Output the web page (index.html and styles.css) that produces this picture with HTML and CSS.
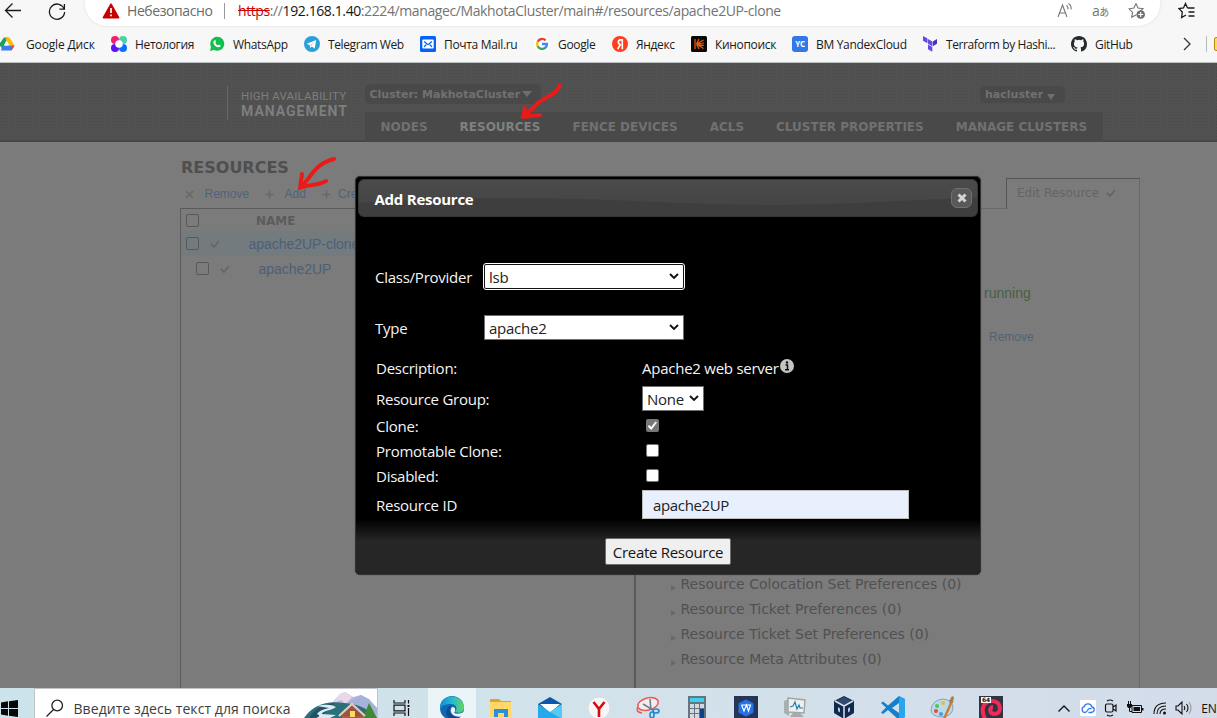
FILE: index.html
```html
<!DOCTYPE html>
<html lang="ru">
<head>
<meta charset="utf-8">
<title>High Availability Management</title>
<link rel="stylesheet" href="styles.css">
</head>
<body>
<div class="screen">
  <header class="browser">
    <div class="toolbar">
      <svg class="ic-back" width="18" height="18" viewBox="0 0 18 18"><path d="M17 9.5H1.5M8.5 2.5l-7 7 7 7" fill="none" stroke="#1b1b1b" stroke-width="1.3"/></svg>
      <svg class="ic-reload" width="18" height="18" viewBox="0 0 18 18"><path d="M16.2 7.2A7.6 7.6 0 1 0 16.6 10" fill="none" stroke="#1b1b1b" stroke-width="1.3"/><path d="M16.4 2v5.2h-5" fill="none" stroke="#1b1b1b" stroke-width="1.3"/></svg>
      <div class="address">
        <svg class="ic-warn" width="18" height="16" viewBox="0 0 18 16"><path d="M9 1.2 16.6 14.6H1.4z" fill="#c80000" stroke="#c80000" stroke-width="1.6" stroke-linejoin="round"/><path d="M9 5v5M9 11.5v1.8" stroke="#fff" stroke-width="1.7"/></svg>
        <span class="insecure">Небезопасно</span>
        <span class="sep"></span>
        <span class="url"><s>https</s>://<b>192.168.1.40</b>:2224/managec/MakhotaCluster/main#/resources/apache2UP-clone</span>
        <span class="address-icons">
          <svg width="17" height="16" viewBox="0 0 17 16" fill="none" stroke="#757575" stroke-width="1.1"><path d="M1 15 5.5 3 10 15M2.6 11h5.8"/><path d="M9.5 3.2q1.8 1.4 1.5 4M11.500 1.500q3 2 2.600 6"/></svg>
          <span class="translate">a<small>あ</small></span>
          <svg width="18" height="18" viewBox="0 0 18 18"><path d="m8 1.5 2 4.5 5 .6-3.6 3.5M8 13l-4.3 2.3.9-4.9L1 6.800l4.900-.7L8 1.500" fill="none" stroke="#757575" stroke-width="1.1"/><circle cx="12.700" cy="12.500" r="4.300" fill="#707070"/><path d="M12.700 10v5M10.200 12.500h5" stroke="#fff" stroke-width="1.100"/></svg>
        </span>
      </div>
      <svg class="ic-fav" width="18" height="18" viewBox="0 0 18 18" fill="none" stroke="#1b1b1b" stroke-width="1.300"><path d="M9.500 6 7.500 1.500 5.500 6 1 6.600 4.300 10 3.600 15.500 8 13M9.500 6h7M10.500 10h6M10.500 14h6"/></svg>
    </div>
    <nav class="bookmarks">
      <a class="bm"><svg width="16" height="16" viewBox="0 0 16 16"><path d="M5 1.500h4L3.500 13 0 8.500z" fill="#17a35a"/><path d="M6 1.500h4.500l5 8h-5z" fill="#fdbb04"/><path d="M3.500 9.500h12L12.500 14.500H2z" fill="#3c7ded"/><path d="m12 10 3.500-.5-3 5z" fill="#ea4335"/><path d="M6.900 5.500 9 9.500H5z" fill="#f7f7f7"/></svg><span>Google Диск</span></a>
      <a class="bm"><svg width="16" height="16" viewBox="0 0 16 16"><rect x="4" y="4" width="8" height="8" fill="#e9e4f6"/><circle cx="4" cy="4" r="4" fill="#f0206f"/><circle cx="12" cy="4" r="4" fill="#49d3a2"/><circle cx="4" cy="12" r="4" fill="#5b12f2"/><circle cx="12" cy="12" r="4" fill="#0b70ff"/><circle cx="8" cy="8" r="3.800" fill="#fff"/></svg><span>Нетология</span></a>
      <a class="bm"><svg width="16" height="16" viewBox="0 0 16 16"><path d="M1 15 2 11a7 7 0 1 1 3 3z" fill="#12c14b"/><path d="M5.200 4.500q1.200-1 1.500.4l.3 1.200-.7.900q1 1.700 2.700 2.400l.9-.900 1.800.9q-.3 2-2.400 1.900-4.600-1-5-5.400z" fill="#fff"/></svg><span>WhatsApp</span></a>
      <a class="bm"><svg width="16" height="16" viewBox="0 0 16 16"><circle cx="8" cy="8" r="8" fill="#2ba0da"/><path d="m2.800 7.800 9.400-3.900-1.500 8.700-3-2.200-1.500 1.500-.4-2.700z" fill="#fff"/><path d="m6 9.300 4.600-3.700-3.500 4.500z" fill="#a9d6ee"/></svg><span class="tight">Telegram Web</span></a>
      <a class="bm"><svg width="16" height="16" viewBox="0 0 16 16"><rect width="16" height="16" rx="1.500" fill="#0560fc"/><rect x="2.300" y="3.500" width="11.400" height="9" rx="1" fill="#fff"/><path d="M4.200 5.500 7 8q1 .8 2 0l2.800-2.500M4 10.800l2.200-2M12 10.800l-2.200-2" stroke="#0560fc" stroke-width="1.300" fill="none"/></svg><span>Почта Mail.ru</span></a>
      <a class="bm"><svg width="16" height="16" viewBox="0 0 16 16" fill="none" stroke-width="2.300"><circle cx="8" cy="8" r="8" fill="#fff"/><path d="M11.600 4.400A4.900 4.900 0 0 0 3.700 5.700" stroke="#ea4335"/><path d="M3.700 5.600a5 5 0 0 0 0 4.800" stroke="#fbbc05"/><path d="M3.700 10.200a5 5 0 0 0 7.700 1.500" stroke="#34a853"/><path d="M8 8h5a5 5 0 0 1-1.700 3.800" stroke="#4285f4"/></svg><span>Google</span></a>
      <a class="bm"><svg width="16" height="16" viewBox="0 0 16 16"><circle cx="8" cy="8" r="8" fill="#fc3f1d"/><path d="M10.300 3v10.200M10.300 3.900H8.400q-2 .2-2 2.300 0 1.900 2.300 2.500M8.600 8l-2.900 5.200" fill="none" stroke="#fff" stroke-width="1.600"/></svg><span>Яндекс</span></a>
      <a class="bm"><svg width="16" height="16" viewBox="0 0 16 16"><rect width="16" height="16" rx="1.500" fill="#090909"/><path d="M4 3v10M5.500 8 8 3M5.500 8l7-4M5.500 8l7.500-1M5.500 8l7.500 1.500M5.500 8l7 4.500M5.500 8 8 13" stroke="#f45a08" stroke-width="1.200"/></svg><span>Кинопоиск</span></a>
      <a class="bm"><span class="yc">YC</span><span>BM YandexCloud</span></a>
      <a class="bm"><svg width="16" height="16" viewBox="0 0 16 16"><path d="m1 0 4.500 2.500v4.800L1 4.800zM6 3l4.300 2.400v4.800L6 7.800zM6 8.600l4.300 2.400v4.800L6 13.200z" fill="#6448ea"/><path d="m15 3-4.200 2.400v4.800L15 7.700z" fill="#4336bd"/></svg><span class="tight">Terraform by Hashi...</span></a>
      <a class="bm"><svg width="16" height="16" viewBox="0 0 16 16"><path d="M8 0C3.580 0 0 3.580 0 8c0 3.540 2.290 6.530 5.470 7.590.4.070.55-.17.55-.38 0-.19-.01-.82-.01-1.490-2.010.37-2.530-.49-2.690-.94-.09-.23-.48-.94-.82-1.130-.28-.15-.68-.52-.01-.53.63-.01 1.080.58 1.230.82.72 1.210 1.870.87 2.330.66.07-.52.28-.87.51-1.070-1.780-.2-3.640-.89-3.640-3.950 0-.87.31-1.590.82-2.150-.08-.2-.36-1.020.08-2.120 0 0 .67-.21 2.200.82a7.500 7.500 0 0 1 4 0c1.530-1.040 2.200-.82 2.200-.82.44 1.100.16 1.920.08 2.120.51.56.82 1.270.82 2.150 0 3.070-1.870 3.750-3.650 3.950.29.25.54.73.54 1.480 0 1.070-.01 1.930-.01 2.200 0 .21.15.46.55.38A8 8 0 0 0 16 8c0-4.420-3.580-8-8-8z" fill="#24292f"/></svg><span>GitHub</span></a>
      <svg class="chev" width="8" height="14" viewBox="0 0 8 14"><path d="m1 1 6 6-6 6" fill="none" stroke="#333" stroke-width="1.300"/></svg>
      <span class="bm-sep"></span>
      <span class="folder"></span>
    </nav>
  </header>

  <main class="page">
    <div class="banner">
      <div class="brand"><span class="brand-top">HIGH AVAILABILITY</span><span class="brand-bottom">MANAGEMENT</span></div>
      <div class="banner-main">
        <div class="selectors">
          <span class="pill cluster">Cluster: MakhotaCluster<i class="down"></i></span>
          <span class="pill user">hacluster<i class="down"></i></span>
        </div>
        <nav class="tabs"><a>NODES</a><a class="current">RESOURCES</a><a>FENCE DEVICES</a><a>ACLS</a><a>CLUSTER PROPERTIES</a><a>MANAGE CLUSTERS</a></nav>
      </div>
    </div>

    <div class="content">
      <section class="list">
        <h1>RESOURCES</h1>
        <div class="actions">
          <svg width="9" height="9" viewBox="0 0 9 9"><path d="m1 1 7 7M8 1 1 8" stroke="#686868" stroke-width="1.500"/></svg><a class="a-remove">Remove</a>
          <svg width="9" height="9" viewBox="0 0 9 9"><path d="M4.500 .5v8M.5 4.500h8" stroke="#686868" stroke-width="1.500"/></svg><a class="a-add">Add</a>
          <svg width="9" height="9" viewBox="0 0 9 9"><path d="M4.500 .5v8M.5 4.500h8" stroke="#686868" stroke-width="1.500"/></svg><a>Create</a>
        </div>
        <div class="table">
          <div class="row head"><i class="box"></i><span>NAME</span></div>
          <div class="row selected"><i class="box"></i><svg class="tick" width="10" height="8" viewBox="0 0 10 8"><path d="m1 4 3 3 5-6" fill="none" stroke="#676767" stroke-width="1.900"/></svg><a>apache2UP-clone</a></div>
          <div class="row child"><i class="box"></i><svg class="tick" width="10" height="8" viewBox="0 0 10 8"><path d="m1 4 3 3 5-6" fill="none" stroke="#676767" stroke-width="1.900"/></svg><a>apache2UP</a></div>
        </div>
      </section>
      <section class="detail">
        <div class="tabrow"><span class="tabfill"></span><span class="edit">Edit Resource<svg width="10" height="8" viewBox="0 0 10 8"><path d="m1 4 3 3 5-6" fill="none" stroke="#666" stroke-width="1.900"/></svg></span></div>
        <div class="panel">
          <span class="running">running</span>
          <a class="remove">Remove</a>
          <ul class="prefs">
            <li>Resource Colocation Set Preferences (0)</li>
            <li>Resource Ticket Preferences (0)</li>
            <li>Resource Ticket Set Preferences (0)</li>
            <li>Resource Meta Attributes (0)</li>
          </ul>
        </div>
      </section>
    </div>

  </main>

  <footer class="taskbar">
    <span class="start"><svg width="17" height="17" viewBox="0 0 17 17"><path d="M0 2.400 7 1.300V8H0zM8 1.200 17 0v8H8zM0 9h7v6.700l-7-1.100zM8 9h9v8l-9-1.300z" fill="#080808"/></svg></span>
    <div class="search">
      <svg class="mag" width="18" height="18" viewBox="0 0 18 18"><circle cx="11.200" cy="6.500" r="5.300" fill="none" stroke="#222" stroke-width="1.300"/><path d="m7.500 10.500-7 7" stroke="#222" stroke-width="1.300"/></svg>
      <span>Введите здесь текст для поиска</span>
      <svg class="scene" width="73" height="26" viewBox="0 0 73 26"><path d="M28 11 36 2l5-2 8 5 8-2 16 13v10H20z" fill="#c3b7dc"/><path d="m36 2-7 9 8-3 5 4 6-7-7-5z" fill="#e9d9e8"/><path d="M42 11 57 3l8 4 8 9v6z" fill="#a5b3da"/><path d="M0 26Q13 7 40 11q20 1 33 15z" fill="#2b6f78"/><path d="M5 26Q14 12 31 11q-7 5-14 15z" fill="#245265"/><path d="M13 14q13-3 19 1-2 2-10 4-5 2-4 3l14 1-6 3H12q6-2 1-4 2-4 12-6-6-1-12-2z" fill="#dcecf2"/><path d="M59 26 65 11l8 15z" fill="#3c8936"/><path d="M38 21h22v5H38z" fill="#a65f42"/><path d="M35 24 48 12l13 12" fill="#945743" stroke="#e9c7bd" stroke-width="2.200"/><path d="M46 19h5v6h-5z" fill="#ffda5a"/></svg>
    </div>
    <span class="task"><svg width="17" height="16" viewBox="0 0 17 16" fill="none" stroke="#111" stroke-width="1.200"><path d="M1 0v3h11V0M1 16v-3h11v3M1 5.200h11v5.600H1zM15.500 0v3.500M15.500 8v8"/><path d="M14.500 5h2v2h-2z" fill="#111" stroke="none"/></svg></span>
    <span class="app active"><svg width="24" height="24" viewBox="0 0 24 24"><defs><linearGradient id="edge" x2="1"><stop stop-color="#1789d5"/><stop offset=".5" stop-color="#23bcd2"/><stop offset="1" stop-color="#65d65b"/></linearGradient></defs><circle cx="12" cy="12" r="12" fill="#1267b3"/><path d="M0 11C1-3 22-3 24 11c0 5-4 7-9 5 3-4 1-8-4-8C5 8 1 10 0 14z" fill="url(#edge)"/><path d="M12 9q-5 5 0 10 5 3 10 0-4 5-10 5C4 22 5 11 12 9z" fill="#0b4a91"/><path d="M12 11q4 0 3 4-.5 2-1 2 4 2 10-1v4q-7 2-11-1-4-4-1-8z" fill="#edf5f8"/></svg></span>
    <span class="app"><svg width="22" height="20" viewBox="0 0 22 20"><path d="M0 1h9l2 2h10v16H0z" fill="#dfa422"/><path d="M0 4h21v15H0z" fill="#ffd869"/><path d="M4 19v-8h14v8h-4v-4H8v4z" fill="#2c8fd8"/></svg></span>
    <span class="app"><svg width="24" height="24" viewBox="0 0 24 24"><path d="M0 8 12 1l12 7v15H0z" fill="#0c58aa"/><path d="M2 8h20l-10 9z" fill="#fff"/><path d="m0 8 12 8 12-8v15H0z" fill="#25a9e8"/><path d="M12 16 24 8v15z" fill="#55c8f5"/></svg></span>
    <span class="app"><svg width="24" height="24" viewBox="0 0 24 24"><circle cx="12" cy="12" r="11" fill="#f7f7f7" stroke="#ddd"/><path d="m6.500 6 5.500 7 5.500-7M12 13v8" fill="none" stroke="#d90a0a" stroke-width="2.600"/></svg></span>
    <span class="app"><svg width="25" height="24" viewBox="0 0 25 24" fill="none"><ellipse cx="13" cy="8" rx="10.500" ry="6" transform="rotate(-15 13 8)" fill="#f5eef0" stroke="#e95757" stroke-width="1.500"/><path d="M3 11q-3 5 4 6" stroke="#e95757" stroke-width="1.500"/><path d="m15 3 1 11M8 8l10 6" stroke="#707e88" stroke-width="1.600"/><ellipse cx="21" cy="15" rx="3" ry="2" stroke="#268bce" stroke-width="1.700"/><ellipse cx="17" cy="19" rx="2" ry="3" stroke="#268bce" stroke-width="1.700"/></svg></span>
    <span class="app"><svg width="18" height="24" viewBox="0 0 18 24"><path d="M0 0h18v24H0z" fill="#657482"/><path d="M2 2h14v4H2z" fill="#3ad0ee"/><path d="M2 8h4v4H2zM7 8h4v4H7zM12 8h4v4h-4zM2 13h4v4H2zM7 13h4v4H7zM2 18h4v4H2zM7 18h4v4H7z" fill="#d5d8dc"/><path d="M12 13h4v9h-4z" fill="#0b4388"/></svg></span>
    <span class="app"><svg width="24" height="24" viewBox="0 0 24 24"><path d="M0 0h24v24H0z" fill="#263557"/><path d="m12 4 7 3.500v9L12 20l-7-3.500v-9z" fill="#2372e8" stroke="#2372e8" stroke-linejoin="round"/><path d="m7.500 9 2.500 6 2.500-6 2 6 2-6h-9" fill="none" stroke="#fff" stroke-width="1.200"/></svg></span>
    <span class="app"><svg width="24" height="22" viewBox="0 0 24 22"><path d="m1 4 5-2v17l-5-3z" fill="#a9b0b0"/><path d="m5 1 17 2-1 13-16-1z" fill="#efefed" stroke="#a5a6a1" stroke-width="1.500"/><path d="m7 10 3-1 2-4 2 7 2-4 1 3 3 0" fill="none" stroke="#1785bd" stroke-width="1.200"/><path d="m10 16-3 4h14l-4-4" fill="#aaa"/></svg></span>
    <span class="app"><svg width="20" height="24" viewBox="0 0 20 24"><path d="m10 0 10 5v12l-10 6-10-6V5z" fill="#10294d"/><path d="m2 5 8-4 8 4-8 4z" fill="#314a70"/><path d="m1 5 9 5v12M19 5l-9 5" stroke="#dce2ed" stroke-width="1.500" fill="none"/><path d="m4 11 2 1.500v4L4 15zM14 12.500l2-1.500v4l-2 1.500z" fill="#bdc9de"/></svg></span>
    <span class="app"><svg width="24" height="24" viewBox="0 0 24 24"><path d="m18 0 6 3v18l-6 3L7 14l-5 4-2-1.500 5-5L0 7l2-1.500 5 4zM18 7l-7 5 7 5z" fill="#1480cb"/><path d="m18 0 6 3v18l-6 3z" fill="#2aa5ed"/></svg></span>
    <span class="app"><svg width="25" height="24" viewBox="0 0 25 24"><path d="M13 3Q2 4 1 14q0 6 10 7 11 0 12-9 0-8-10-9z" fill="#b8dbe9" stroke="#80a6b9"/><circle cx="7" cy="10" r="2" fill="#5ac04f"/><circle cx="13" cy="7" r="2" fill="#f4b92e"/><circle cx="6" cy="15" r="2" fill="#e54b35"/><circle cx="11" cy="18" r="2" fill="#419fde"/><path d="M22 5 14 23" stroke="#cf7d35" stroke-width="2.500"/><path d="m19 5 3-5 2 1-1 6-3 1z" fill="#a87f54"/></svg></span>
    <span class="app debian"><svg width="24" height="24" viewBox="0 0 24 24"><path d="M0 0h24v24H0z" fill="#303544"/><path d="M6 23C0 10 7 5 13 5c10 0 10 13 3 13-6 0-6-7-2-7" fill="none" stroke="#f02b57" stroke-width="4"/></svg><b>64</b></span>
    <span class="tray">
      <svg width="14" height="9" viewBox="0 0 14 9"><path d="m1.500 7.500 5.500-5.500 5.500 5.500" fill="none" stroke="#111" stroke-width="1.400"/></svg>
      <svg width="16" height="16" viewBox="0 0 16 16"><rect width="16" height="16" rx="1" fill="#fff"/><path d="M4.500 12.500a3 3 0 0 1-.3-5.800 4 4 0 0 1 7.700.3q2.800.7 2.300 3.200-.6 2.300-3 2.300H8.500M4.500 12.500q2 0 3-2l1-1.500q1.500-1.200 3 0" fill="none" stroke="#337af2" stroke-width="1.300"/></svg>
      <svg width="14" height="18" viewBox="0 0 14 18" fill="none" stroke="#111" stroke-width="1.200"><rect x="1.500" y="5" width="7.500" height="8" rx="1.500"/><path d="m9 8 3-2v6l-3-2M3 2q3-2 6 0M3 16q3 2 6 0"/></svg>
      <svg width="17" height="14" viewBox="0 0 17 14"><path d="M5 4.500h9.500v7H5z" fill="none" stroke="#111"/><path d="M6.500 6h6.500v4H6.500zM15 7h1.500v2.500H15zM0 3h5v2.500L3.500 7h-2L0 5.500zM1 0h1v3H1zM3 0h1v3H3z" fill="#111"/><path d="M2.500 6v4.500H5" stroke="#111" fill="none"/></svg>
      <svg width="14" height="14" viewBox="0 0 14 14" fill="none" stroke="#111" stroke-width="1.100"><path d="M1 13Q1 2 13 2M4 13q0-8 9-8M7 13q0-5 6-5"/><circle cx="11.500" cy="12" r="1.500" fill="#111" stroke="none"/></svg>
      <svg width="17" height="14" viewBox="0 0 17 14" fill="none" stroke="#111" stroke-width="1.100"><path d="M1 5h2l4-4v12L3 9H1zM9 5q1.500 2 0 4M11.500 3q3 4 0 8"/><path d="M14 1q4 6 0 12" stroke="#999"/></svg>
      <span>EN</span>
    </span>
  </footer>

  <div class="dialog">
    <div class="titlebar">
      <svg class="wave" width="619" height="36" viewBox="0 0 619 36" preserveAspectRatio="none"><path d="M0 23C80 18 170 17 250 20S390 27 470 24 570 19 619 18V36H0z" fill="#3c3c3c" opacity=".75"/></svg>
      <span class="title">Add Resource</span>
      <span class="close"><svg width="10" height="10" viewBox="0 0 10 10"><path d="m1.500 1.500 7 7M8.500 1.500l-7 7" stroke="#d5d5d5" stroke-width="2.900"/></svg></span>
    </div>
    <form class="form">
      <label class="pick"><span>Class/Provider</span><span class="select focus"><em>lsb</em><svg width="10" height="7" viewBox="0 0 10 7"><path d="m1 1 4 4 4-4" fill="none" stroke="#111" stroke-width="1.900"/></svg></span></label>
      <label class="pick type"><span>Type</span><span class="select"><em>apache2</em><svg width="10" height="7" viewBox="0 0 10 7"><path d="m1 1 4 4 4-4" fill="none" stroke="#111" stroke-width="1.900"/></svg></span></label>
      <div class="fields">
        <span>Description:</span><span class="desc">Apache2 web server<svg width="14" height="14" viewBox="0 0 14 14"><circle cx="7" cy="7" r="7" fill="#c4c4c4"/><path d="M5.500 6h2v4.500M5 10.800h4" fill="none" stroke="#111" stroke-width="1.500"/><circle cx="7" cy="3.500" r="1.200" fill="#111"/></svg></span>
        <span>Resource Group:</span><span class="select small"><em>None</em><svg width="10" height="7" viewBox="0 0 10 7"><path d="m1 1 4 4 4-4" fill="none" stroke="#111" stroke-width="1.900"/></svg></span>
        <span>Clone:</span><i class="check on"><svg width="13" height="13" viewBox="0 0 13 13"><path d="m2.500 6.700 2.700 2.800 5-6.500" fill="none" stroke="#fff" stroke-width="2"/></svg></i>
        <span>Promotable Clone:</span><i class="check lower"></i>
        <span>Disabled:</span><i class="check"></i>
        <span>Resource ID</span><span class="input">apache2UP</span>
      </div>
    </form>
    <div class="buttons"><span class="create">Create Resource</span></div>
  </div>

  <svg class="mark mark-tab" width="48" height="44" viewBox="0 0 48 44"><path d="M43 5C39 16 26 17 19 25L7 37M8 28 6 37l17-2" fill="none" stroke="#e81b1b" stroke-width="4" stroke-linecap="round" stroke-linejoin="round"/></svg>
  <svg class="mark mark-add" width="44" height="40" viewBox="0 0 44 40"><path d="M38 4C25 7 18 15 12 24L5 32M6 19 4 33C12 29 22 31 30 26" fill="none" stroke="#e81b1b" stroke-width="4" stroke-linecap="round" stroke-linejoin="round"/></svg>
</div>
</body>
</html>
```

FILE: styles.css
```css
* { box-sizing: border-box; }
body { margin: 0; background: #7b7b7b; font-family: "Open Sans", "Noto Sans", sans-serif; }
svg { display: block; flex: none; }
.screen { position: relative; width: 1217px; height: 718px; overflow: hidden; display: flex; flex-direction: column; white-space: nowrap; }

/* browser chrome */
.browser { flex: none; height: 63px; background: #f7f7f7; border-bottom: 1px solid #bdc0c0; display: flex; flex-direction: column; }
.toolbar { height: 26px; display: flex; align-items: flex-start; flex: none; }
.ic-back { margin: 1px 0 0 4px; }
.ic-reload { margin: 2px 0 0 26px; }
.address { margin-left: 19px; width: 1075px; height: 26px; background: #fff; border-radius: 0 0 22px 22px; box-shadow: 0 0 3px #ddd; display: flex; align-items: flex-start; padding-left: 17px; }
.ic-warn { margin-top: 3px; }
.insecure { margin-left: 7px; width: 97px; font-size: 14px; line-height: 22px; color: #6b6b6b; letter-spacing: -.42px; }
.sep { width: 1px; height: 16px; margin-top: 3px; background: #999; }
.url { margin-left: 13px; width: 819px; font-size: 14px; line-height: 22px; color: #737373; letter-spacing: -.4px; }
.url s { color: #c80000; }
.url b { font-weight: 400; color: #151515; }
.address-icons { display: flex; gap: 18px; padding-top: 2px; }
.translate { font: 14px/17px "Open Sans", "Noto Sans CJK JP", sans-serif; color: #757575; width: 18px; letter-spacing: -.5px; }
.translate small { font-size: 10px; }
.ic-fav { margin: 2px 0 0 18px; }
.bookmarks { height: 36px; display: grid; grid-template-columns: 112px 98px 95px 116px 114px 78px 79px 101px 130px 149px 112px 23px 8px 4px; align-items: center; margin-left: -1px; font-size: 12px; color: #1a1a1a; }
.bm { display: flex; align-items: center; gap: 8px; letter-spacing: -.33px; }
.bm:first-child { gap: 11px; letter-spacing: -.15px; }
.tight { letter-spacing: -.4px; }
.yc { width: 16px; height: 16px; border-radius: 3px; background: #3378eb; color: #fff; font: bold 8px/16px "Open Sans", sans-serif; text-align: center; }
.bm-sep { width: 1px; height: 16px; background: #bbb; }
.folder { width: 8px; height: 14px; background: #ffd763; border: 1px solid #bd8a16; border-radius: 2px; }

/* dimmed application page */
.page { flex: none; height: 625px; overflow: hidden; background: #7b7b7b; font-family: "DejaVu Sans", sans-serif; }
.banner { height: 79px; display: flex; padding-left: 227px; background: radial-gradient(circle, #4b4b4b 0 .5px, transparent 1px) 0 0 / 3px 3px, #515151; border-bottom: 2px solid #474747; }
.brand { width: 138px; height: 34px; margin-top: 23px; border-left: 1px solid #696969; padding-left: 13px; display: flex; flex-direction: column; color: #7e7e7e; }
.brand-top { font: 11.500px/20px Roboto, sans-serif; letter-spacing: .2px; }
.brand-bottom { font: bold 14px/11px Roboto, sans-serif; letter-spacing: 1px; }
.banner-main { width: 738px; font-weight: bold; color: #717171; }
.selectors { display: flex; height: 49px; padding-top: 21px; align-items: flex-start; font-size: 11px; }
.pill { height: 20px; border-radius: 5px; background: #494949; display: flex; align-items: center; padding: 1px 0 0 4.500px; }
.cluster { width: 176px; }
.cluster .down { margin-top: -1px; margin-left: 2px; }
.user { width: 85px; height: 17px; margin: 2px 0 0 439px; padding: 0 0 0 5px; line-height: 15px; }
.down { border: 5px solid transparent; border-top: 6px solid #6e6e6e; border-bottom: 0; margin-left: 3px; }
.user .down { margin-top: 4px; margin-left: 4px; border-width: 6px 4.500px 0; }
.tabs { height: 30px; background: #494949; display: flex; gap: 32px; padding-left: 15.500px; font-size: 12px; line-height: 31px; }
.current { color: #808080; }
.content { display: flex; padding-left: 180px; height: 546px; }
.list { width: 454px; }
.list h1 { margin: 16px 0 0 1px; font-size: 16px; line-height: 19px; color: #4f4f4f; }
.actions { height: 31px; display: flex; align-items: center; padding: 3px 0 0 5px; font: 12px "Liberation Sans", sans-serif; color: #4f6378; }
.actions a { margin-left: 10.500px; }
.actions .a-remove { width: 60.500px; }
.actions .a-add { width: 37px; }
.actions a:last-child { margin-left: 7.500px; }
.table { height: 490px; border: 1px solid #5b5b5b; border-width: 1px 0 0 1px; }
.row { display: flex; align-items: center; height: 25px; padding-left: 5px; color: #4b6077; font: 14px "Liberation Sans", sans-serif; }
.row.head { height: 22px; font: bold 12px "DejaVu Sans", sans-serif; color: #5b5b5b; padding-top: 1px; }
.head span { margin-left: 57px; }
.selected { background: #747b7f; }
.child { padding-left: 15px; }
.box { width: 13px; height: 13px; border: 1px solid #585858; border-radius: 2px; }
.tick { margin: 0 28.500px 0 11px; }
.child a, .selected a { letter-spacing: -.04px; }
.detail { width: 506px; padding-top: 36px; }
.tabrow { height: 31px; display: flex; }
.tabfill { width: 372px; border-bottom: 1px solid #696969; }
.edit { width: 134px; border: 1px solid #565656; border-bottom: 0; border-right-color: #696969; padding: 0 0 2px 10px; display: flex; gap: 7px; align-items: center; font-size: 12px; line-height: 25px; color: #646464; }
.panel { height: 490px; border-left: 2px solid #5b5b5b; border-right: 1px solid #696969; display: flex; flex-direction: column; font-family: "Liberation Sans", sans-serif; }
.running { margin: 74px 0 0 348px; font-size: 14px; line-height: 20px; color: #465f43; }
.remove { margin: 25px 0 0 353px; font-size: 12px; line-height: 18px; color: #4f6378; }
.prefs { list-style: none; margin: 226px 0 0; padding: 0 0 0 35px; font: 14px/25px "DejaVu Sans", sans-serif; color: #515151; }
.prefs li { display: flex; align-items: center; gap: 4.500px; }
.prefs li::before { content: ""; border: 3px solid transparent; border-left: 5px solid #686868; border-right: 0; margin-top: 6px; }

/* taskbar */
.taskbar { flex: none; height: 40px; display: flex; align-items: stretch; background: linear-gradient(90deg, #cbe3ea, #d2e2ea 50%, #d4dcea); }
.start { width: 33.500px; flex: none; display: flex; align-items: center; padding-left: 1px; }
.search { width: 344px; flex: none; background: #fff; border: 1px solid #bfc5c7; display: flex; align-items: center; padding-left: 11px; font-size: 14px; color: #3d3d3d; }
.search span { margin-left: 10px; width: 230px; letter-spacing: .07px; padding-top: 1px; }
.scene { align-self: flex-start; margin-top: 3px; }
.task { width: 50.500px; flex: none; display: flex; align-items: center; padding-left: 15px; }
.app { width: 49.100px; flex: none; display: flex; align-items: center; justify-content: center; }
.app.active { width: 48px; background: #ebf4f7; }
.debian { position: relative; }
.debian b { position: absolute; left: 14px; top: 9px; background: #fff; color: #111; font: bold 6px/6px "DejaVu Sans", sans-serif; padding: 0 1px; }
.tray { flex: none; margin-left: 41px; display: flex; align-items: center; gap: 8.700px; font-size: 12px; color: #111; }

/* modal */
.dialog { position: absolute; left: 355px; top: 176px; width: 626px; height: 399px; border: 1px solid #333; border-radius: 5px; background: #000; padding: 2px 2px 0; color: #f5f5f5; font-size: 15px; display: flex; flex-direction: column; overflow: hidden; box-shadow: 0 0 1px #333; }
.titlebar { position: relative; flex: none; height: 38px; border: 1px solid #363636; border-radius: 6px; background: linear-gradient(#4b4b4b, #424242); display: flex; align-items: center; justify-content: space-between; padding: 0 5px 0 15.500px; overflow: hidden; }
.wave { position: absolute; left: 0; top: 0; }
.title { position: relative; font-weight: bold; color: #fff; padding-top: 2px; letter-spacing: -.25px; }
.close { position: relative; width: 21px; height: 20px; border: 1px solid #707070; border-radius: 6px; background: #595959; display: grid; place-items: center; }
.form { margin: 0; height: 302px; flex: none; padding: 46px 0 0 17px; letter-spacing: -.25px; }
.pick { display: flex; align-items: center; height: 27px; }
.pick > span:first-child { width: 109px; }
.type { margin-top: 25px; height: 25px; }
.type > span:first-child, .type em { padding-top: 1px; }
.select { width: 200px; height: 25px; border: 1px solid #6f6f6f; background: #fff; color: #222; display: flex; align-items: center; justify-content: space-between; padding: 0 4px; }
.select em { font-style: normal; }
.select svg { margin-top: -1px; }
.focus { border: 1px solid #111; border-radius: 2px; outline: 1.500px solid #fff; }
.fields { display: grid; grid-template-columns: 266px 268px; grid-template-rows: 29px 33px 22px 27px 24px 34px; align-items: center; margin: 13px 0 0 1px; }
.desc { display: flex; align-items: center; gap: 1.500px; }
.desc svg { margin-top: -4px; }
.small { width: 62px; }
.check { width: 13px; height: 13px; margin: -2px 0 0 4px; background: #fff; border: 1px solid #777; border-radius: 2px; }
.check.on { background: #777; border: 0; }
.check.lower { margin-top: 0; }
.input { width: 267px; height: 29px; margin-top: -1px; background: #e8f0fe; border: 1px solid #bbb; color: #222; padding-left: 10px; line-height: 29px; letter-spacing: -.35px; }
.buttons { flex: 1; margin: 0 -2px; background: linear-gradient(#000, #262626 22px); display: flex; justify-content: center; align-items: flex-start; padding-top: 19px; }
.create { height: 27px; width: 126px; background: #efefef; border: 1px solid #6e6e6e; border-radius: 2px; color: #151515; line-height: 27px; text-align: center; letter-spacing: -.3px; }

/* hand-drawn arrows */
.mark { position: absolute; }
.mark-tab { left: 517px; top: 80px; }
.mark-add { left: 296px; top: 155px; }
```
